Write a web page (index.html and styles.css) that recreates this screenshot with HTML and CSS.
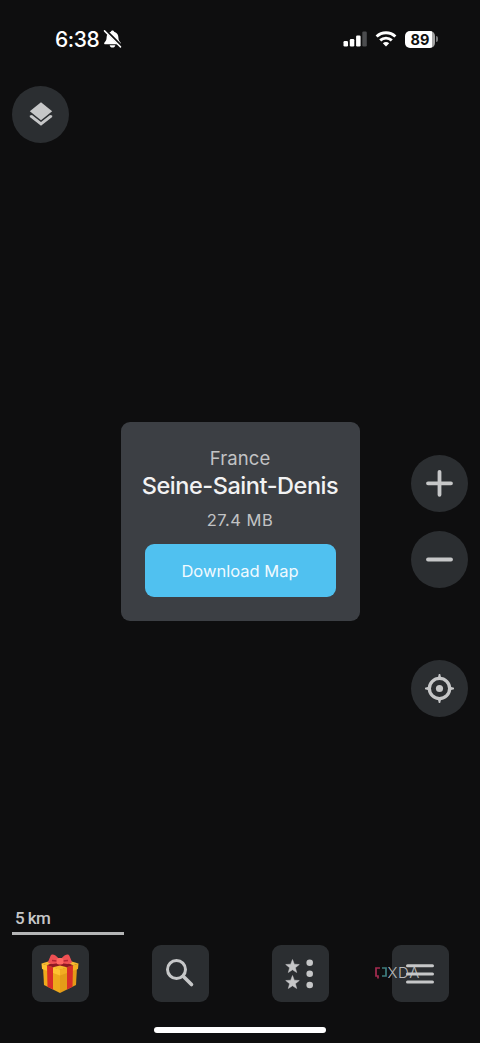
FILE: index.html
```html
<!DOCTYPE html>
<html lang="en">
<head>
<meta charset="utf-8">
<meta name="viewport" content="width=device-width, initial-scale=1">
<title>Map</title>
<link rel="stylesheet" href="styles.css">
</head>
<body>
<div class="screen">
  <header class="status">
    <div class="status-left">
      <span class="time">6:38</span>
      <svg class="bell" width="19" height="20" viewBox="0 0 19 20">
        <path d="M9.500 1.400c-.9 0-1.500.6-1.600 1.300C4.800 3.500 3.600 6 3.600 8.500c0 2.700-1 3.700-2.100 4.900-.8.9-.3 1.900.9 1.900h14.200c1.200 0 1.700-1 .9-1.900-1.100-1.200-2.100-2.200-2.100-4.900 0-2.500-1.200-5-4.300-5.800-.1-.7-.7-1.300-1.600-1.300zM6.700 16.300h5.600c-.2 1.500-1.300 2.300-2.800 2.300s-2.600-.8-2.800-2.300z" fill="#fff"/>
        <path d="M2.300 1.200 18.200 17.100" stroke="#0e0e0f" stroke-width="3"/>
        <path d="M1.500 1.900 17.500 17.900" stroke="#fff" stroke-width="1.500" stroke-linecap="round"/>
      </svg>
    </div>
    <div class="status-right">
      <svg width="24" height="16" viewBox="0 0 24 16" fill="#fff">
        <rect x="0.500" y="10" width="4.500" height="5.500" rx="1.200"/>
        <rect x="6.800" y="8" width="4.500" height="7.500" rx="1.200"/>
        <rect x="13.100" y="4.500" width="4.500" height="11" rx="1.200"/>
        <rect x="19.300" y="0.500" width="4.500" height="15" rx="1.200" fill="#4b4c4e"/>
      </svg>
      <svg width="22" height="16" viewBox="0 0 22 16" fill="none" stroke="#fff" stroke-width="2.900">
        <path d="M1.600 5.500C6.900.5 15.100.5 20.400 5.500"/>
        <path d="M5.200 9.400c3.300-3.100 8.300-3.100 11.600 0"/>
        <path d="M7.800 12.300c1.800-1.700 4.600-1.700 6.400 0L11 15.600z" fill="#fff" stroke="none"/>
      </svg>
      <div class="battery"><span class="level">89</span><span class="nub"></span></div>
    </div>
  </header>

  <div class="top-tools">
    <button class="round" aria-label="Layers">
      <svg class="layers" width="28" height="28" viewBox="0 0 28 28" fill="#c6c7c8">
        <path d="M14 2.300 25.200 11.300 14 20.200 2.800 11.300z"/>
        <path d="M2.800 15.400 5 14.900 14 21.900 23 14.900 25.200 15.400V17L14 25.700 2.800 17z"/>
      </svg>
    </button>
  </div>

  <main class="map">
    <section class="card">
      <div class="country">France</div>
      <h1 class="region">Seine-Saint-Denis</h1>
      <div class="size">27.4 MB</div>
      <button class="download">Download Map</button>
    </section>
    <div class="map-tools">
      <button class="round" aria-label="Zoom in">
        <svg width="29" height="29" viewBox="0 0 29 29" stroke="#c6c7c8" stroke-width="3.800" stroke-linecap="round"><path d="M3 14.300h23M14.500 2.800v23"/></svg>
      </button>
      <button class="round zoom-out" aria-label="Zoom out">
        <svg width="29" height="29" viewBox="0 0 29 29" stroke="#c6c7c8" stroke-width="3.800" stroke-linecap="round"><path d="M3 14.500h23"/></svg>
      </button>
      <button class="round locate" aria-label="My position">
        <svg width="29" height="29" viewBox="0 0 30 30" fill="none" stroke="#c6c7c8">
          <circle cx="15" cy="15" r="10.500" stroke-width="3.400"/>
          <circle cx="15" cy="15" r="3.700" fill="#c6c7c8" stroke="none"/>
          <path d="M13.300 4 14.300 0h1.400L16.700 4zM13.300 26 14.300 30h1.400L16.700 26zM4 13.300 0 14.300v1.400L4 16.700zM26 13.300 30 14.300v1.400L26 16.700z" fill="#c6c7c8" stroke="none"/>
        </svg>
      </button>
    </div>
  </main>

  <div class="scale">5 km</div>

  <nav class="tabs">
    <button class="tab" aria-label="Gift">
      <svg width="40" height="42" viewBox="0 0 40 42">
        <path d="M3 14 20 21V40L4 32z" fill="#efa91c"/>
        <path d="M20 21 37 14 36 32 20 40z" fill="#e49b18"/>
        <path d="M1.500 10.500 20 5l18.500 5.500L20 17z" fill="#f6b92f"/>
        <path d="M1.500 10.500 20 16.500v6L2 16z" fill="#ffc331"/>
        <path d="M20 16.500 38.500 10.500 38 16 20 22.500z" fill="#f2ad22"/>
        <path d="M7 12.300 13 14.200V36.600L7.500 33.700z" fill="#d92e27"/>
        <path d="M33 12.300 27 14.200V36.600L32.500 33.700z" fill="#d92e27"/>
        <path d="M7 12.300 13 9.500H27L33 12.300 27 14.200 20 12.500 13 14.200z" fill="#8f1824"/>
        <path d="M19 6C15 .5 11 .5 10.500 3L8 9c1 3 8 2 11 .8zM21 6c4-5.500 8-5.500 8.500-3L32 9c-1 3-8 2-11 .8z" fill="#ee5053"/>
        <path d="M12 7.500 17 8M28 7.500 23 8" stroke="#b72635" stroke-width="1.500"/>
        <rect x="16.500" y="5" width="7" height="6.500" rx="2.500" fill="#ff6761"/>
      </svg>
    </button>
    <button class="tab" aria-label="Search">
      <svg class="search" width="30" height="30" viewBox="0 0 30 30" fill="none" stroke="#c6c7c8">
        <circle cx="11.500" cy="11.500" r="9" stroke-width="3"/>
        <path d="M18.200 18.200 26.500 26.500" stroke-width="3.600" stroke-linecap="round"/>
      </svg>
    </button>
    <button class="tab" aria-label="Bookmarks">
      <svg width="30" height="32" viewBox="0 0 30 32" fill="#c6c7c8">
        <path id="star" d="M7.500 1.500 9.300 6.200 14.300 6.500 10.400 9.700 11.700 14.500 7.500 11.800 3.300 14.500 4.600 9.700.7 6.500 5.700 6.200z" stroke="#c6c7c8" stroke-width=".5" stroke-linejoin="round"/>
        <use href="#star" y="16"/>
        <circle cx="24.700" cy="4.700" r="3.300"/><circle cx="24.700" cy="15.800" r="3.300"/><circle cx="24.700" cy="27" r="3.300"/>
      </svg>
    </button>
    <button class="tab" aria-label="Menu">
      <svg width="30" height="22" viewBox="0 0 30 22" stroke="#c6c7c8" stroke-width="3" stroke-linecap="round"><path d="M2.500 2.800h25M2.500 11h25M2.500 19h25"/></svg>
      <span class="watermark">
        <svg width="12" height="14" viewBox="0 0 12 14" fill="none" stroke-width="1.700">
          <path d="M5 2H1v8h2v2.500" stroke="#b52f58"/>
          <path d="M7 2h4v8H7" stroke="#438b8c"/>
        </svg>
        <span class="brand">XDA</span>
      </span>
    </button>
  </nav>
  <div class="home"></div>
</div>
</body>
</html>
```
FILE: styles.css
```css
* { box-sizing: border-box; }
body { margin: 0; background: #0e0e0f; font-family: Inter, "Liberation Sans", sans-serif; }
button { border: 0; padding: 0; margin: 0; font: inherit; }
svg { display: block; flex: none; }

.screen { width: 480px; height: 1043px; display: flex; flex-direction: column; overflow: hidden; }

.status { height: 78px; padding: 0 42px 0 55px; display: flex; justify-content: space-between; align-items: center; color: #fff; }
.status-left { display: flex; align-items: center; gap: 4px; }
.time { font-size: 21px; font-weight: 550; line-height: 26px; letter-spacing: -0.4px; padding-top: 1px; }
.status-right { display: flex; align-items: center; gap: 8px; }
.battery { display: flex; align-items: center; gap: 1px; }
.level { width: 30px; height: 17px; border-radius: 5px; background: linear-gradient(90deg, #fff 89%, #a3a3a3 89%); color: #101010; font-size: 14.5px; font-weight: 700; line-height: 17px; text-align: center; }
.nub { width: 2px; height: 6px; border-radius: 0 2px 2px 0; background: #77787a; }

.top-tools { padding: 8px 12px 0; }
.round { width: 57px; height: 57px; border-radius: 50%; background: #2b2e31; display: flex; align-items: center; justify-content: center; }
.layers { margin-bottom: 1px; }

.map { height: 764px; display: grid; grid-template-columns: 1fr 239px 1fr; align-items: start; }
.card { grid-column: 2; margin-top: 279px; height: 199px; padding: 24px; border-radius: 9px; background: #3c3f44; display: flex; flex-direction: column; align-items: center; white-space: nowrap; }
.country { font-size: 18.5px; line-height: 24px; letter-spacing: 0.1px; color: #c2c3c5; }
.region { margin: 2px 0 0; font-size: 23.5px; font-weight: 450; line-height: 28px; letter-spacing: -0.45px; color: #f2f2f3; }
.size { margin-top: 9px; font-size: 16.5px; line-height: 22px; letter-spacing: 0.5px; color: #c2c3c5; }
.download { margin-top: 13px; width: 191px; height: 53px; flex: none; border-radius: 9px; background: #50c1f0; color: #f0faff; font-size: 16.5px; letter-spacing: 0; }
.map-tools { grid-column: 3; justify-self: end; margin: 312px 12px 0 0; }
.zoom-out { margin-top: 19px; }
.locate { margin-top: 72px; }

.scale { width: 112px; height: 28px; margin-left: 12px; padding-left: 3px; border-bottom: 3px solid #b4b5b6; color: #c6c7c8; font-family: Roboto, sans-serif; font-size: 17px; font-weight: 500; line-height: 22px; letter-spacing: -0.6px; }

.tabs { margin-top: 10px; display: grid; grid-template-columns: repeat(4, 1fr); justify-items: center; }
.tab { position: relative; width: 57px; height: 57px; border-radius: 9px; background: #2b2e31; display: flex; align-items: center; justify-content: center; }
.search { margin: 0 1px 1px 0; }
.watermark { position: absolute; left: -17px; top: 20px; display: flex; align-items: center; gap: 1px; opacity: .9; }
.brand { font-family: Inter, sans-serif; font-size: 15px; font-weight: 300; line-height: 16px; letter-spacing: 0.7px; color: #c9cacc; }
.home { width: 172px; height: 6px; margin: 25px auto 0; border-radius: 3px; background: #fff; }
```
